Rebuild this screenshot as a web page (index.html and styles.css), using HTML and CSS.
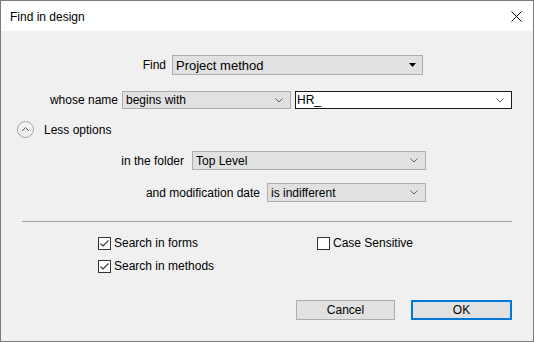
FILE: index.html
```html
<!DOCTYPE html>
<html>
<head>
<meta charset="utf-8">
<link rel="stylesheet" href="styles.css">
</head>
<body>
<div class="window">
  <div class="titlebar">
    <span class="title">Find in design</span>
    <svg class="close" width="11" height="11" viewBox="0 0 11 11"><path d="M0.5 0.5 L10.5 10.5 M10.5 0.5 L0.5 10.5" stroke="#000" stroke-width="1" fill="none"/></svg>
  </div>
  <div class="content">
    <div class="row row-find">
      <label class="lbl lbl-find">Find</label>
      <div class="select select-find">
        <span>Project method</span>
        <svg class="tri" width="7" height="4" viewBox="0 0 7 4"><path d="M0 0 H7 L3.5 4 Z" fill="#000"/></svg>
      </div>
    </div>
    <div class="row row-name">
      <label class="lbl lbl-name">whose name</label>
      <div class="select select-begins">
        <span>begins with</span>
        <svg class="chev" width="8" height="5" viewBox="0 0 8 5"><path d="M0.5 0.5 L4 4 L7.5 0.5" stroke="#606060" stroke-width="1" fill="none"/></svg>
      </div>
      <div class="select combo">
        <span>HR_</span>
        <svg class="chev" width="8" height="5" viewBox="0 0 8 5"><path d="M0.5 0.5 L4 4 L7.5 0.5" stroke="#606060" stroke-width="1" fill="none"/></svg>
      </div>
    </div>
    <div class="row row-less">
      <svg class="circle" width="17" height="17" viewBox="0 0 17 17"><circle cx="8.5" cy="8.5" r="8" stroke="#a6a6a6" stroke-width="1" fill="none"/><path d="M5 10 L8.5 6.5 L12 10" stroke="#5a5a5a" stroke-width="1" fill="none"/></svg>
      <span class="less">Less options</span>
    </div>
    <div class="row row-folder">
      <label class="lbl lbl-folder">in the folder</label>
      <div class="select select-folder">
        <span>Top Level</span>
        <svg class="chev" width="8" height="5" viewBox="0 0 8 5"><path d="M0.5 0.5 L4 4 L7.5 0.5" stroke="#606060" stroke-width="1" fill="none"/></svg>
      </div>
    </div>
    <div class="row row-date">
      <label class="lbl lbl-date">and modification date</label>
      <div class="select select-date">
        <span>is indifferent</span>
        <svg class="chev" width="8" height="5" viewBox="0 0 8 5"><path d="M0.5 0.5 L4 4 L7.5 0.5" stroke="#606060" stroke-width="1" fill="none"/></svg>
      </div>
    </div>
    <div class="separator"></div>
    <div class="checks checks-1">
      <div class="check">
        <span class="box checked"><svg width="11" height="11" viewBox="0 0 11 11"><path d="M1.5 5.5 L4 8 L9.5 2.5" stroke="#333" stroke-width="1.1" fill="none"/></svg></span>
        <span>Search in forms</span>
      </div>
      <div class="check">
        <span class="box"></span>
        <span>Case Sensitive</span>
      </div>
    </div>
    <div class="checks checks-2">
      <div class="check">
        <span class="box checked"><svg width="11" height="11" viewBox="0 0 11 11"><path d="M1.5 5.5 L4 8 L9.5 2.5" stroke="#333" stroke-width="1.1" fill="none"/></svg></span>
        <span>Search in methods</span>
      </div>
    </div>
    <div class="buttons">
      <button class="btn">Cancel</button>
      <button class="btn btn-default">OK</button>
    </div>
  </div>
</div>
</body>
</html>
```

FILE: styles.css
```css
* { box-sizing: border-box; }
html, body { margin: 0; padding: 0; }
body {
  font-family: "Liberation Sans", Arial, sans-serif;
  font-size: 12px;
  color: #000;
  background: #f0f0f0;
}
.window {
  width: 534px;
  height: 342px;
  border: 1px solid #7a7a7a;
  background: #f0f0f0;
  display: flex;
  flex-direction: column;
}
.titlebar {
  height: 30px;
  background: #fff;
  display: flex;
  align-items: center;
  padding-left: 9px;
  padding-right: 11px;
  flex: none;
}
.title {
  flex: 1;
  font-size: 12px;
  padding-top: 1px;
}
.close { display: block; }
.content {
  flex: 1;
  display: flex;
  flex-direction: column;
}
.row {
  display: flex;
  align-items: center;
}
.lbl {
  text-align: right;
  white-space: nowrap;
}
.select {
  display: flex;
  align-items: center;
  justify-content: space-between;
  background: #e1e1e1;
  border: 1px solid #adadad;
  padding: 0 7px 0 3px;
  white-space: nowrap;
}
.select span { padding-top: 0; }

.row-find { margin-top: 24px; padding-left: 99px; height: 20px; }
.lbl-find { width: 66px; margin-right: 6px; }
.select-find { width: 251px; height: 20px; padding-right: 6px; font-size: 13px; }

.row-name { margin-top: 16px; padding-left: 39px; height: 18px; }
.lbl-name { width: 78px; margin-right: 4px; }
.select-begins { width: 169px; height: 18px; }
.combo { width: 217px; height: 18px; margin-left: 4px; background: #fff; border-color: #1a1a1a; padding-left: 1px; }

.row-less { margin-top: 12px; padding-left: 16px; height: 17px; }
.circle { display: block; margin-right: 10px; }

.row-folder { margin-top: 13px; padding-left: 99px; height: 19px; }
.lbl-folder { width: 84px; margin-right: 8px; }
.select-folder { width: 234px; height: 19px; }

.row-date { margin-top: 13px; padding-left: 99px; height: 19px; }
.lbl-date { width: 160px; margin-right: 7px; }
.select-date { width: 159px; height: 19px; }

.separator {
  margin: 19px 21px 0 21px;
  height: 1px;
  background: #a0a0a0;
}
.checks {
  display: grid;
  grid-template-columns: 219px auto;
  padding-left: 97px;
  height: 13px;
}
.checks-1 { margin-top: 14px; }
.checks-2 { margin-top: 10px; }
.check {
  display: flex;
  align-items: center;
  gap: 3px;
}
.box {
  width: 13px;
  height: 13px;
  border: 1px solid #333;
  background: #fff;
  display: flex;
  align-items: center;
  justify-content: center;
}
.box svg { display: block; }

.buttons {
  margin-top: 28px;
  display: flex;
  justify-content: flex-end;
  gap: 16px;
  padding-right: 21px;
}
.btn {
  font-family: "Liberation Sans", Arial, sans-serif;
  font-size: 12px;
  color: #000;
  height: 20px;
  width: 99px;
  background: #e1e1e1;
  border: 1px solid #adadad;
  padding: 0;
  margin: 0;
}
.btn-default {
  width: 101px;
  border: 2px solid #0078d7;
}
```
